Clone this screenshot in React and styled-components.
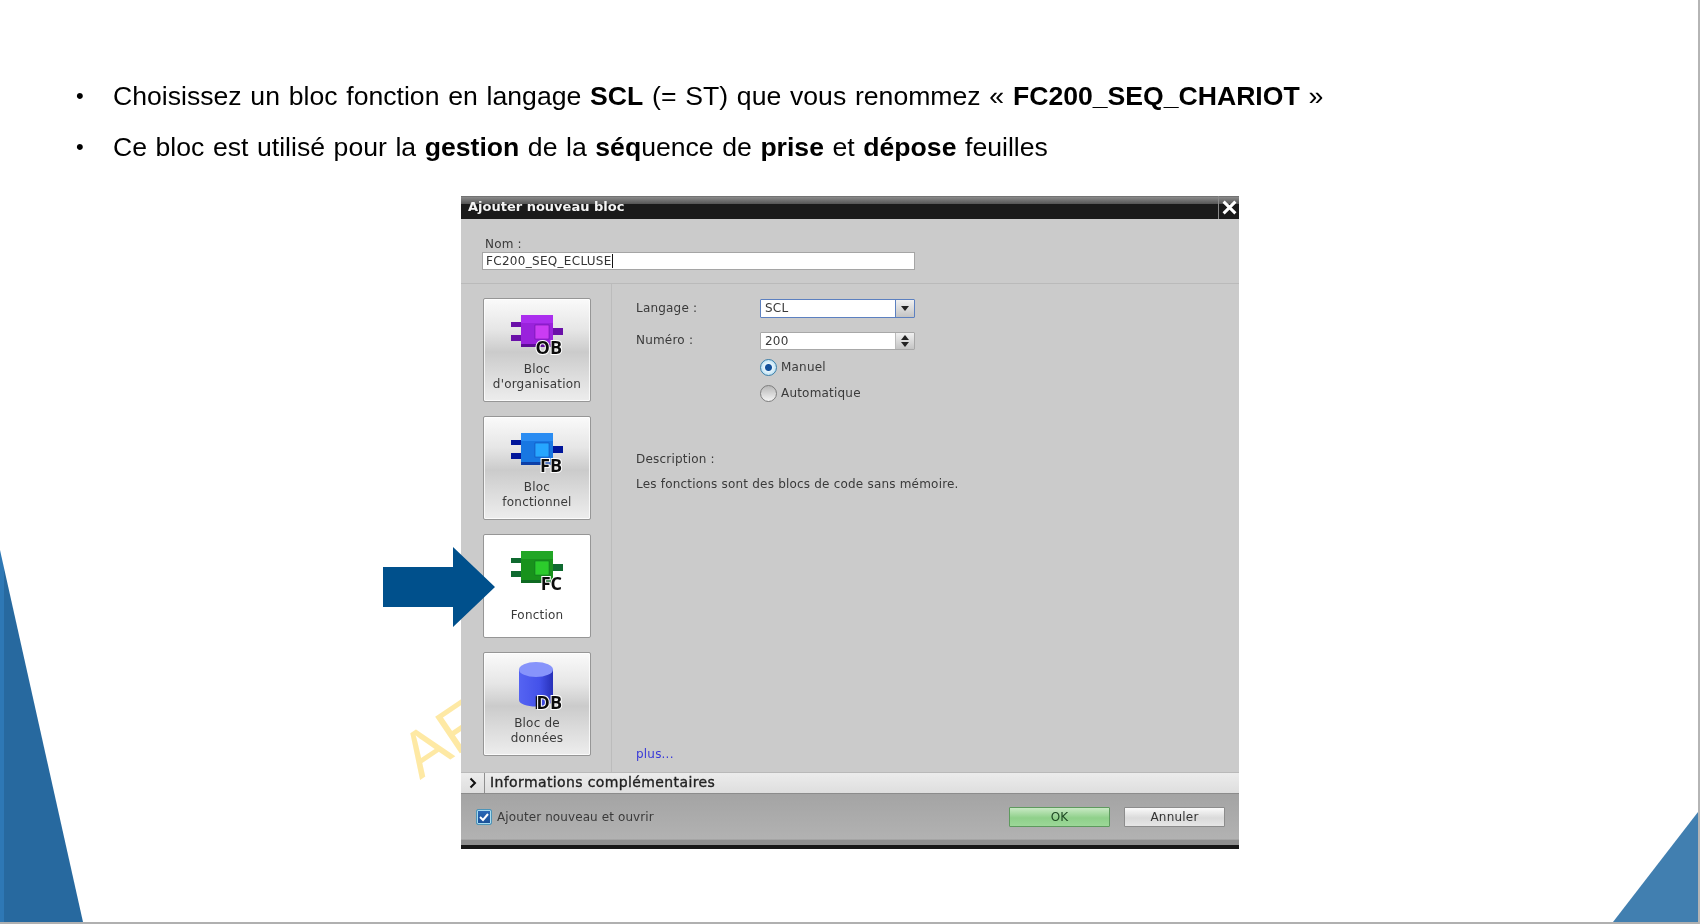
import React from "react";
import styled, { createGlobalStyle } from "styled-components";

const GlobalStyle = createGlobalStyle`
    html, body {
        margin: 0;
        padding: 0;
        background: #fff;
    }
`;

const Slide = styled.div`
    position: relative;
    width: 1700px;
    height: 924px;
    box-sizing: border-box;
    overflow: hidden;
    background: #fff;
    padding-top: 76px;
    border-right: 2px solid #b5b5b5;
    border-bottom: 2px solid #b0b0b0;
    font-family: "Liberation Sans", Arial, sans-serif;
`;

const LeftCorner = styled.div`
    position: absolute;
    left: 0;
    bottom: 0;
    width: 83px;
    height: 372px;
    background: linear-gradient(90deg, #2e78b5 0 4px, #27699f 4px);
    clip-path: polygon(0 0, 100% 100%, 0 100%);
`;

const RightCorner = styled.div`
    position: absolute;
    right: 0;
    bottom: 0;
    width: 85px;
    height: 110px;
    background: #417fb0;
    clip-path: polygon(100% 0, 100% 100%, 0 100%);
`;

const Bullets = styled.ul`
    list-style: none;
    margin: 0;
    padding: 0 0 0 76px;
    color: #000;
    font-size: 26.6px;
    filter: blur(0.3px);
`;

const Bullet = styled.li`
    display: flex;
    align-items: center;
    height: 40px;
    margin-bottom: 11px;
    white-space: pre;
    word-spacing: ${(p) => p.$spacing}px;

    &::before {
        content: "•";
        width: 37px;
        font-size: 22px;
        flex: none;
    }

    b {
        font-weight: 700;
    }
`;

const Watermark = styled.span`
    position: absolute;
    left: 420px;
    top: 726px;
    font-size: 64px;
    line-height: 1;
    color: #fee9a4;
    transform: rotate(-34deg);
    transform-origin: 0 54px;
`;

const Arrow = styled.svg`
    position: absolute;
    left: 383px;
    top: 547px;
    z-index: 2;
`;

const Dialog = styled.div`
    position: relative;
    display: flex;
    flex-direction: column;
    width: 778px;
    height: 653px;
    margin: 29px 0 0 461px;
    background: #cbcbcb;
    color: #3a3a3a;
    font-family: "DejaVu Sans", sans-serif;
    font-size: 12px;
    letter-spacing: 0.2px;
    filter: blur(0.4px);
`;

const TitleBar = styled.div`
    display: flex;
    align-items: stretch;
    justify-content: space-between;
    flex: none;
    height: 23px;
    background: linear-gradient(#5c5c5c 0, #8a8a8a 1px, #555 8px, #1a1a1a 8px);
    color: #f4f4f4;
    font-weight: 700;
    font-size: 13px;
    letter-spacing: 0;
`;

const TitleText = styled.span`
    padding: 1px 0 0 7px;
    line-height: 20px;
`;

const CloseCell = styled.div`
    display: flex;
    align-items: center;
    justify-content: center;
    width: 20px;
    border-left: 1px solid #8a8a8a;
`;

const NameArea = styled.div`
    flex: none;
    height: 65px;
    box-sizing: border-box;
    padding: 17px 0 0 21px;
    border-bottom: 1px solid #bababa;
`;

const NameLabel = styled.div`
    height: 16px;
    line-height: 16px;
    padding-left: 3px;
`;

const NameInput = styled.div`
    display: flex;
    align-items: center;
    width: 433px;
    height: 18px;
    box-sizing: border-box;
    padding-left: 3px;
    background: #fff;
    border: 1px solid #a5a5a5;
    color: #333;
    letter-spacing: 0.3px;

    &::after {
        content: "";
        width: 1px;
        height: 14px;
        background: #111;
    }
`;

const Main = styled.div`
    display: flex;
    flex: 1;
    min-height: 0;
`;

const Sidebar = styled.div`
    display: flex;
    flex-direction: column;
    gap: 14px;
    flex: none;
    width: 151px;
    box-sizing: border-box;
    padding: 14px 0 0 22px;
    border-right: 1px solid #bcbcbc;
`;

const Card = styled.div`
    display: flex;
    flex-direction: column;
    align-items: center;
    width: 108px;
    height: 104px;
    box-sizing: border-box;
    padding-top: 7px;
    border: 1px solid #969696;
    border-radius: 2px;
    background: ${(p) =>
        p.$active
            ? "#fff"
            : "linear-gradient(#fafafa 0, #e6e6e6 30%, #cbcbcb 52%, #dcdcdc 75%, #ededed 100%)"};
    box-shadow: inset 0 0 0 1px rgba(255, 255, 255, 0.75);
`;

const CardIcon = styled.svg`
    flex: none;
`;

const CardLabel = styled.div`
    display: flex;
    align-items: center;
    flex: 1;
    padding-top: ${(p) => (p.$low ? 5 : 0)}px;
    padding-bottom: 10px;
    text-align: center;
    line-height: 15px;
`;

const Content = styled.div`
    display: flex;
    flex-direction: column;
    flex: 1;
    padding: 15px 0 10px 24px;
`;

const FormRow = styled.div`
    display: flex;
    align-items: center;
    height: ${(p) => p.$height}px;
    margin-bottom: ${(p) => p.$gap || 0}px;
`;

const FieldLabel = styled.span`
    width: 124px;
    padding-bottom: 2px;
`;

const Field = styled.div`
    display: flex;
    align-items: stretch;
    width: 155px;
    height: 100%;
    box-sizing: border-box;
    background: #fff;
    border: 1px solid ${(p) => (p.$focus ? "#5c80c0" : "#a8a8a8")};
    border-radius: 1px;
`;

const FieldValue = styled.span`
    flex: 1;
    padding-left: 4px;
    line-height: 16px;
`;

const FieldButton = styled.div`
    display: flex;
    flex-direction: column;
    align-items: center;
    justify-content: center;
    gap: 2px;
    width: 18px;
    border-left: 1px solid ${(p) => (p.$focus ? "#5c80c0" : "#bbb")};
    background: linear-gradient(#f0f0f0, #c4c4c4);
`;

const Caret = styled.i`
    width: 0;
    height: 0;
    border-left: 4px solid transparent;
    border-right: 4px solid transparent;
    border-top: ${(p) => (p.$up ? "none" : "5px solid #222")};
    border-bottom: ${(p) => (p.$up ? "5px solid #222" : "none")};
`;

const RadioRow = styled.div`
    display: flex;
    align-items: center;
    gap: 4px;
    height: 26px;
    margin-left: 124px;
`;

const RadioDot = styled.span`
    display: flex;
    align-items: center;
    justify-content: center;
    width: 17px;
    height: 17px;
    box-sizing: border-box;
    border-radius: 50%;
    border: 1px solid ${(p) => (p.$checked ? "#3a7ea8" : "#7d7d7d")};
    background: ${(p) =>
        p.$checked
            ? "radial-gradient(circle, #124f9a 0 3px, #e6f4fb 4px, #9fd3ee 100%)"
            : "linear-gradient(#b8b8b8, #f4f4f4)"};
`;

const Description = styled.div`
    margin-top: 45px;
    height: 16px;
    line-height: 16px;
`;

const DescriptionText = styled.div`
    margin-top: 9px;
    line-height: 16px;
`;

const MoreLink = styled.a`
    margin-top: auto;
    color: #3a3ad8;
    line-height: 16px;
`;

const InfoBar = styled.div`
    display: flex;
    align-items: stretch;
    flex: none;
    height: 22px;
    background: linear-gradient(#ececec, #dedede);
    border-top: 1px solid #b9b9b9;
    box-sizing: border-box;
    border-bottom: 1px solid #8c8c8c;
    color: #222;
`;

const InfoToggle = styled.div`
    display: flex;
    align-items: center;
    justify-content: center;
    width: 23px;
    border-right: 1px solid #8f8f8f;
`;

const InfoTitle = styled.span`
    padding-left: 5px;
    font-size: 14px;
    letter-spacing: 0.38px;
    line-height: 18px;
    -webkit-text-stroke: 0.35px #222;
`;

const Footer = styled.div`
    display: flex;
    align-items: center;
    flex: none;
    height: 55px;
    box-sizing: border-box;
    padding: 0 14px 10px 15px;
    background: linear-gradient(#a4a4a4 0, #b2b2b2 82%, #8e8e8e 84%, #8e8e8e 92%, #161616 92%);
`;

const CheckBox = styled.span`
    display: flex;
    align-items: center;
    justify-content: center;
    width: 16px;
    height: 16px;
    box-sizing: border-box;
    border: 1px solid #4d94b8;
    border-radius: 2px;
    background: linear-gradient(#2a6ab8, #1a4f96);
    box-shadow: inset 0 0 0 1px #a8dcf0;
`;

const CheckLabel = styled.span`
    margin-left: 5px;
    margin-right: auto;
    letter-spacing: 0.1px;
`;

const DialogButton = styled.div`
    display: flex;
    align-items: center;
    justify-content: center;
    width: 101px;
    height: 20px;
    box-sizing: border-box;
    margin-left: ${(p) => p.$gap || 0}px;
    border: 1px solid ${(p) => (p.$primary ? "#5e9a5e" : "#8c8c8c")};
    border-radius: 1px;
    background: ${(p) =>
        p.$primary
            ? "linear-gradient(#c8e9c4, #8fd08a 55%, #9cd898)"
            : "linear-gradient(#fafafa, #dadada 55%, #e6e6e6)"};
    color: ${(p) => (p.$primary ? "#1f4a24" : "#333")};
`;

const BadgeText = styled.text`
    font-family: "Open Sans", sans-serif;
    font-weight: 700;
    font-size: 18px;
    letter-spacing: 0;
    fill: #0c0c0c;
    stroke: #fff;
    stroke-width: 2px;
    paint-order: stroke;
    text-anchor: end;
`;

const blockColors = {
    OB: { light: "#ab2eee", body: "#9a22dc", edge: "#5e0c98", inner: "#cb3cf4", pin: "#6a10a8" },
    FB: { light: "#2a8cf2", body: "#1877e2", edge: "#0c3fa8", inner: "#26a6ff", pin: "#00159a" },
    FC: { light: "#22a626", body: "#18921c", edge: "#0e6a22", inner: "#2ccb2c", pin: "#0f6a30" },
};

// small block drawing shared by OB, FB and FC
function BlockIcon({ kind }) {
    const c = blockColors[kind];
    return (
        <CardIcon width="58" height="56" viewBox="0 0 58 56">
            <rect x="3" y="16" width="11" height="5" fill={c.pin} />
            <rect x="3" y="29" width="11" height="6" fill={c.pin} />
            <rect x="44" y="22" width="11" height="7" fill={c.pin} />
            <rect x="13" y="9" width="32" height="32" fill={c.body} />
            <rect x="13" y="9" width="32" height="8" fill={c.light} />
            <rect x="13" y="38" width="32" height="3" fill={c.edge} />
            <rect x="27" y="19" width="14" height="14" fill={c.inner} stroke={c.edge} strokeWidth="0.5" />
            <BadgeText x="54" y="48">
                {kind}
            </BadgeText>
        </CardIcon>
    );
}

function DataIcon() {
    return (
        <CardIcon width="58" height="56" viewBox="0 0 58 56">
            <defs>
                <linearGradient id="dbBody" x1="0" x2="1" y1="0" y2="0">
                    <stop offset="0" stopColor="#5564f2" />
                    <stop offset="0.6" stopColor="#4452ea" />
                    <stop offset="1" stopColor="#2730b8" />
                </linearGradient>
            </defs>
            <path d="M11 9.500V40c0 4 8 6.500 17 6.500S45 44 45 40V9.500z" fill="url(#dbBody)" />
            <ellipse cx="28" cy="9.500" rx="17" ry="7.500" fill="#8794fb" />
            <path d="M28.500 49V37h3" fill="none" stroke="#111" strokeWidth="1.500" />
            <BadgeText x="54" y="49">
                DB
            </BadgeText>
        </CardIcon>
    );
}

function App() {
    return (
        <>
            <GlobalStyle />
            <Slide>
                <LeftCorner />
                <RightCorner />
                <Watermark>AF</Watermark>
                <Arrow width="112" height="80" viewBox="0 0 112 80">
                    <path d="M0 20h70V0l42 40-42 40V60H0z" fill="#00508c" />
                </Arrow>
                <Bullets>
                    <Bullet $spacing={1.4}>
                        <span>
                            Choisissez un bloc fonction en langage <b>SCL</b> (= ST) que vous renommez «{" "}
                            <b>FC200_SEQ_CHARIOT</b> »
                        </span>
                    </Bullet>
                    <Bullet $spacing={1.2}>
                        <span>
                            Ce bloc est utilisé pour la <b>gestion</b> de la <b>séq</b>uence de <b>prise</b> et{" "}
                            <b>dépose</b> feuilles
                        </span>
                    </Bullet>
                </Bullets>
                <Dialog>
                    <TitleBar>
                        <TitleText>Ajouter nouveau bloc</TitleText>
                        <CloseCell>
                            <svg width="15" height="15" viewBox="0 0 14 14">
                                <path d="M1.500 1.500l11 11M12.500 1.500l-11 11" stroke="#fff" strokeWidth="2.800" />
                            </svg>
                        </CloseCell>
                    </TitleBar>
                    <NameArea>
                        <NameLabel>Nom :</NameLabel>
                        <NameInput>FC200_SEQ_ECLUSE</NameInput>
                    </NameArea>
                    <Main>
                        <Sidebar>
                            <Card>
                                <BlockIcon kind="OB" />
                                <CardLabel>
                                    Bloc
                                    <br />
                                    d'organisation
                                </CardLabel>
                            </Card>
                            <Card>
                                <BlockIcon kind="FB" />
                                <CardLabel>
                                    Bloc
                                    <br />
                                    fonctionnel
                                </CardLabel>
                            </Card>
                            <Card $active>
                                <BlockIcon kind="FC" />
                                <CardLabel $low>Fonction</CardLabel>
                            </Card>
                            <Card>
                                <DataIcon />
                                <CardLabel>
                                    Bloc de
                                    <br />
                                    données
                                </CardLabel>
                            </Card>
                        </Sidebar>
                        <Content>
                            <FormRow $height={19} $gap={14}>
                                <FieldLabel>Langage :</FieldLabel>
                                <Field $focus>
                                    <FieldValue>SCL</FieldValue>
                                    <FieldButton $focus>
                                        <Caret />
                                    </FieldButton>
                                </Field>
                            </FormRow>
                            <FormRow $height={18} $gap={4}>
                                <FieldLabel>Numéro :</FieldLabel>
                                <Field>
                                    <FieldValue>200</FieldValue>
                                    <FieldButton>
                                        <Caret $up />
                                        <Caret />
                                    </FieldButton>
                                </Field>
                            </FormRow>
                            <RadioRow>
                                <RadioDot $checked />
                                Manuel
                            </RadioRow>
                            <RadioRow>
                                <RadioDot />
                                Automatique
                            </RadioRow>
                            <Description>Description :</Description>
                            <DescriptionText>Les fonctions sont des blocs de code sans mémoire.</DescriptionText>
                            <MoreLink>plus...</MoreLink>
                        </Content>
                    </Main>
                    <InfoBar>
                        <InfoToggle>
                            <svg width="10" height="12" viewBox="0 0 10 12">
                                <path d="M2.500 1.500L7 6l-4.500 4.500" fill="none" stroke="#111" strokeWidth="2" />
                            </svg>
                        </InfoToggle>
                        <InfoTitle>Informations complémentaires</InfoTitle>
                    </InfoBar>
                    <Footer>
                        <CheckBox>
                            <svg width="12" height="12" viewBox="0 0 12 12">
                                <path d="M2 6l3 3 5-6" fill="none" stroke="#fff" strokeWidth="2" />
                            </svg>
                        </CheckBox>
                        <CheckLabel>Ajouter nouveau et ouvrir</CheckLabel>
                        <DialogButton $primary>OK</DialogButton>
                        <DialogButton $gap={14}>Annuler</DialogButton>
                    </Footer>
                </Dialog>
            </Slide>
        </>
    );
}

export default App;
